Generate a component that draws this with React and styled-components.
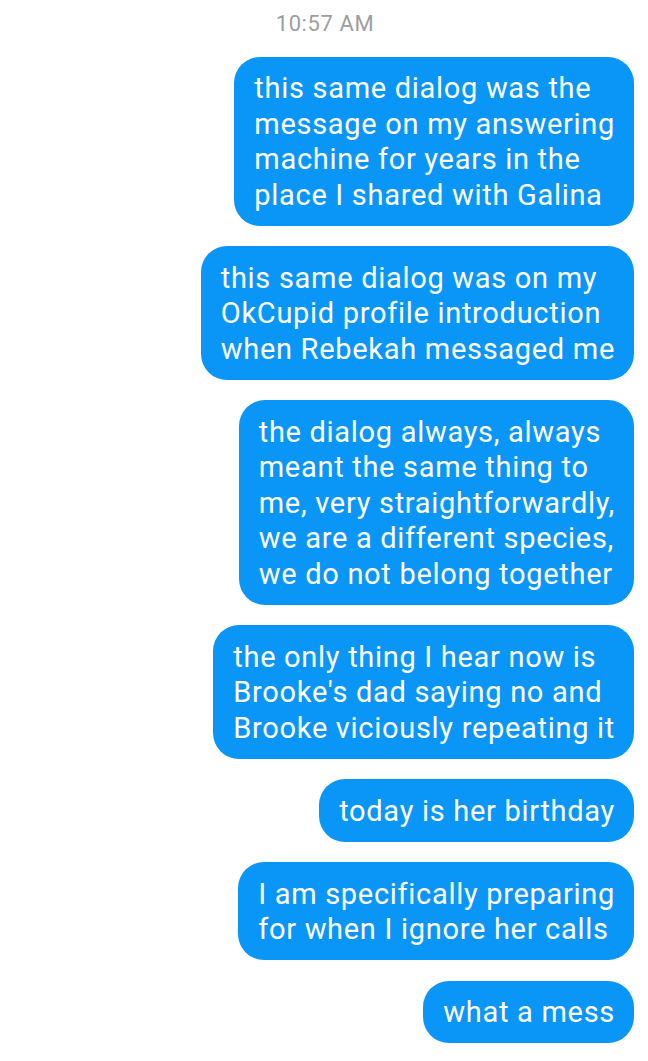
import React from "react";
import styled, { createGlobalStyle } from "styled-components";

const GlobalStyle = createGlobalStyle`
  html, body {
    margin: 0;
    padding: 0;
    background: #fff;
  }
  body {
    font-family: Roboto, "Noto Sans", "Liberation Sans", sans-serif;
  }
`;

const Thread = styled.div`
  display: flex;
  flex-direction: column;
  align-items: flex-end;
  gap: 20.5px;
  padding: 11px 14px 0 14px;
`;

const Stamp = styled.div`
  align-self: stretch;
  text-align: center;
  color: #9e9e9e;
  font-size: 22px;
  letter-spacing: 0.6px;
  line-height: 26px;
  margin-bottom: -1px;
  padding-left: 2px;
`;

const Bubble = styled.div`
  background: #0a96f7;
  color: #fff;
  font-size: 29px;
  letter-spacing: 0.7px;
  line-height: 35.5px;
  padding: 14.5px 19px 12.5px 20px;
  border-radius: 26px;
  white-space: nowrap;
`;

const messages = [
  [
    "this same dialog was the",
    "message on my answering",
    "machine for years in the",
    "place I shared with Galina",
  ],
  [
    "this same dialog was on my",
    "OkCupid profile introduction",
    "when Rebekah messaged me",
  ],
  [
    "the dialog always, always",
    "meant the same thing to",
    "me, very straightforwardly,",
    "we are a different species,",
    "we do not belong together",
  ],
  [
    "the only thing I hear now is",
    "Brooke's dad saying no and",
    "Brooke viciously repeating it",
  ],
  ["today is her birthday"],
  ["I am specifically preparing", "for when I ignore her calls"],
  ["what a mess"],
];

const App = () => {
  return (
    <>
      <GlobalStyle />
      <Thread>
        <Stamp>10:57 AM</Stamp>
        {messages.map((lines, i) => (
          <Bubble key={i}>
            {lines.map((line, j) => (
              <React.Fragment key={j}>
                {j > 0 && <br />}
                {line}
              </React.Fragment>
            ))}
          </Bubble>
        ))}
      </Thread>
    </>
  );
};

export default App;
